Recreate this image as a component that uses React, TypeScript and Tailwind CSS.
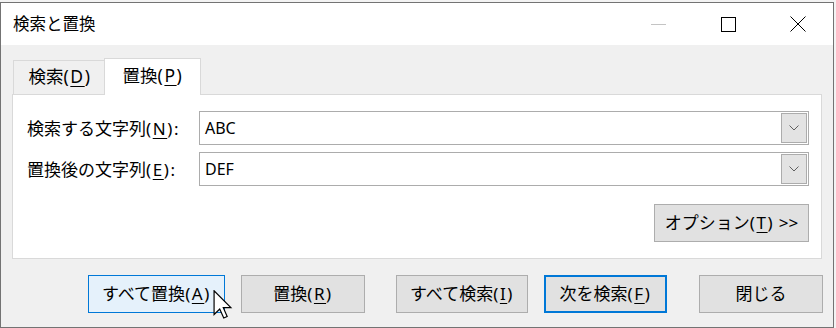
import React from "react";

const font = { fontFamily: '"Noto Sans", "Noto Sans CJK JP", sans-serif' };

function U({ children }: { children: React.ReactNode }) {
  return <span className="underline underline-offset-[3px] decoration-1">{children}</span>;
}

function K({ k, tail = "" }: { k: string; tail?: string }) {
  return (
    <span className="tracking-[1.6px]">
      (<U>{k}</U>){tail}
    </span>
  );
}

function Btn({
  children,
  className,
}: {
  children: React.ReactNode;
  className: string;
}) {
  return (
    <div
      className={
        "h-[38px] flex items-center justify-center text-[17px] leading-none text-black " +
        className
      }
    >
      <span className="-mt-[1px]">{children}</span>
    </div>
  );
}

function Combo({ value }: { value: string }) {
  return (
    <div className="w-[610px] h-[34px] border border-[#acacac] bg-white flex items-center p-[1px]">
      <span className="flex-1 pl-[4px] text-[16px] leading-none text-black">{value}</span>
      <div className="w-[26px] h-[30px] bg-[#e3e3e3] border border-[#acacac] flex items-center justify-center">
        <svg width="10" height="6" viewBox="0 0 10 6">
          <path d="M0.5 0.5 L5 5 L9.5 0.5" fill="none" stroke="#606060" strokeWidth="1" />
        </svg>
      </div>
    </div>
  );
}

export default function App() {
  return (
    <div className="w-[836px] h-[328px] bg-[#f3f3f3] pt-[2px] relative" style={font}>
      <div className="w-[834px] h-[326px] border border-[#737373] bg-[#f0f0f0] flex flex-col">
        {/* Title bar */}
        <div className="h-[42px] bg-white flex items-center">
          <div className="flex-1 pl-[12px] text-[16.5px] leading-none text-black">検索と置換</div>
          <div className="w-[70px] h-full flex items-center justify-center">
            <div className="w-[15px] h-px bg-[#c4c4c4]" />
          </div>
          <div className="w-[70px] h-full flex items-center justify-center">
            <div className="w-[15px] h-[15px] border border-black" />
          </div>
          <div className="w-[70px] h-full flex items-center justify-center">
            <svg width="16" height="16" viewBox="0 0 16 16">
              <path d="M0.5 0.5 L15.5 15.5 M15.5 0.5 L0.5 15.5" stroke="#000" strokeWidth="1" />
            </svg>
          </div>
        </div>

        {/* Body */}
        <div className="flex-1 flex flex-col">
          {/* Tabs */}
          <div className="flex items-end pl-[12px] mt-[13px] h-[36px]">
            <div className="w-[91px] h-[34px] border-t border-l border-[#d9d9d9] flex items-center justify-center text-[17.5px] leading-none text-black">
              <span className="-mt-[1px] ml-[2px]">
                検索<K k="D" />
              </span>
            </div>
            <div className="relative z-10 -mb-px w-[97px] h-[37px] border border-b-0 border-[#d9d9d9] bg-white flex items-center justify-center text-[17.5px] leading-none text-black">
              <span className="-mt-[2px] ml-[1px]">
                置換<K k="P" />
              </span>
            </div>
          </div>

          {/* Panel */}
          <div className="ml-[11px] w-[810px] h-[165px] border border-[#d9d9d9] bg-white flex flex-col pl-[14px] pr-[12px] pt-[16px]">
            <div className="flex items-center justify-between">
              <div className="text-[17px] leading-none text-black">
                検索する文字列<K k="N" tail=":" />
              </div>
              <Combo value="ABC" />
            </div>
            <div className="flex items-center justify-between mt-[7px]">
              <div className="text-[17px] leading-none text-black">
                置換後の文字列<K k="E" tail=":" />
              </div>
              <Combo value="DEF" />
            </div>
            <div className="flex justify-end mt-[18px]">
              <Btn className="w-[155px] bg-[#e1e1e1] border border-[#adadad]">
                オプション<K k="T" /> &gt;&gt;
              </Btn>
            </div>
          </div>

          {/* Bottom buttons */}
          <div className="flex mt-[16px]">
            <Btn className="ml-[87px] w-[137px] bg-[#e5f1fb] border border-[#0078d7]">
              すべて置換<K k="A" />
            </Btn>
            <Btn className="ml-[16px] w-[124px] bg-[#e1e1e1] border border-[#adadad]">
              置換<K k="R" />
            </Btn>
            <Btn className="ml-[31px] w-[132px] bg-[#e1e1e1] border border-[#adadad]">
              すべて検索<K k="I" />
            </Btn>
            <Btn className="ml-[16px] w-[123px] bg-[#e1e1e1] border-2 border-[#0078d7]">
              次を検索<K k="F" />
            </Btn>
            <Btn className="ml-[32px] w-[124px] bg-[#e1e1e1] border border-[#adadad]">
              閉じる
            </Btn>
          </div>
        </div>
      </div>

      {/* Mouse cursor */}
      <svg
        className="absolute left-[213px] top-[290px]"
        width="20"
        height="29"
        viewBox="0 0 13 19.5"
      >
        <path
          d="M0.5 0.5 L0.5 16.5 L4.3 12.8 L7 18.8 L9.3 17.8 L6.7 11.9 L11.8 11.9 Z"
          fill="#fff"
          stroke="#000"
          strokeWidth="0.8"
          strokeLinejoin="miter"
        />
      </svg>
    </div>
  );
}
